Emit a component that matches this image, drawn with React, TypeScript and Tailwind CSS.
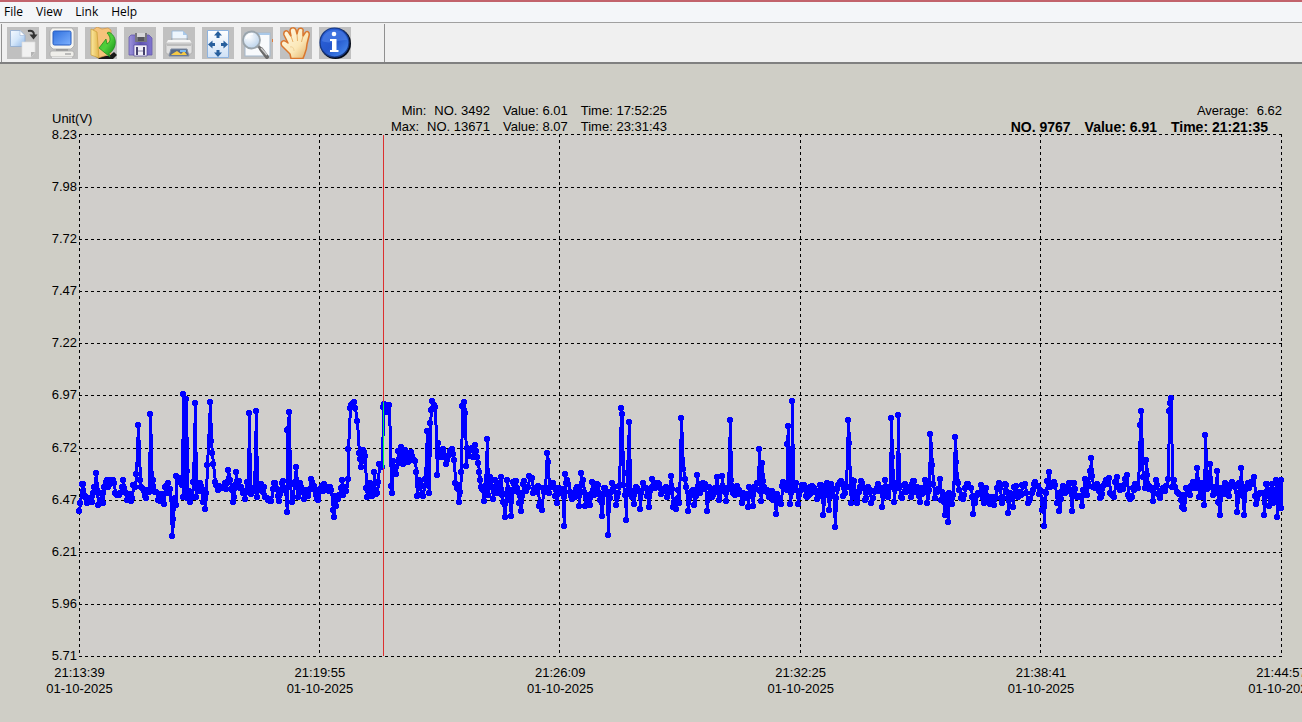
import React from "react";

const menuItems = ["File", "View", "Link", "Help"];

const yLabels = [
  "8.23", "7.98", "7.72", "7.47", "7.22", "6.97", "6.72", "6.47", "6.21", "5.96", "5.71",
];

const xLabels = ["21:13:39", "21:19:55", "21:26:09", "21:32:25", "21:38:41", "21:44:57"];

const extremes = [
  { label: "Min:", no: "NO. 3492", value: "Value: 6.01", time: "Time: 17:52:25" },
  { label: "Max:", no: "NO. 13671", value: "Value: 8.07", time: "Time: 23:31:43" },
];

const gridX = [0, 240, 480, 721, 961, 1202];
const gridY = [0, 53, 105, 157, 209, 261, 314, 366, 418, 470, 522];

// Turning points of the trace, in thirds of a plot unit, relative to each block's start
const BLOCK_TOP = 246;
const blocks: { start: number; points: string }[] = [
  {
    start: -9,
    points:
      "28,393 30,370 35,313 48,353 65,366 77,280 85,375 100,368 103,320 125,305 147,345 160,300 170,360 183,363 197,282 204,135 213,320 228,353 241,101 250,300 263,360 281,372 293,308 305,468 308,417 318,375 319,288 335,315 338,42 340,350 348,57 350,273 352,355 365,350 370,305 374,69 378,350 390,308 400,365 406,387 412,255 420,66 422,183 430,252 435,305 460,325 475,270 480,300 488,366 498,277 510,325 525,358 530,305 536,99 542,342 557,93 560,350 572,312 590,355 604,362 612,310 627,363 635,310 650,396 652,150 656,96 660,315 665,366 677,261 683,350 690,310 703,357 727,306 745,360",
  },
  {
    start: 241,
    points:
      "2,325 12,313 30,320 38,390 41,411 48,378 58,345 66,300 70,345 83,298 84,207 89,84 103,66 106,84 110,123 116,218 124,262 130,210 136,228 138,325 142,350 150,310 155,347 161,276 163,312 172,338 178,252 187,260 188,80 192,72 202,95 207,75 212,318 215,340 220,243 228,283 233,213 238,250 244,202 250,252 256,210 264,245 272,215 280,240 286,243 288,276 292,348 298,300 304,345 312,318 320,153 326,338 329,128 336,64 345,80 350,285 354,190 362,230 370,207 377,252 386,225 395,207 402,240 405,310 416,366 422,276 425,78 431,66 434,98 437,258 440,205 447,228 455,203 460,230 464,194 470,230 476,276 482,320 491,363 500,177 505,345 511,290 520,357 526,300 535,340 542,290 545,345 554,411 560,300 572,408 578,305 588,303 598,368 602,393 608,312 616,330 626,288 636,295 640,340 650,322 656,378 665,391 668,325 680,219 684,246 688,340 698,310 710,369 716,325",
  },
  {
    start: 481,
    points:
      "2,335 11,438 14,282 25,312 36,358 52,322 58,378 62,279 68,300 76,378 90,376 97,305 102,345 110,312 125,408 136,325 143,465 150,355 155,308 167,376 178,318 182,84 185,102 190,315 195,345 197,420 202,279 206,126 210,340 221,372 232,325 239,388 248,308 258,325 266,382 277,296 290,310 300,325 318,320 320,350 332,288 338,382 347,388 355,330 357,370 362,114 370,267 378,320 383,393 392,335 403,376 410,285 420,340 436,312 440,393 448,320 455,350 470,290 478,360 485,288 490,325 498,362 509,120 520,340 532,317 545,368 553,345 565,382 568,320 580,378 590,308 596,207 602,363 606,250 612,320 632,338 647,402 655,355 662,372 668,305 680,330 682,192 685,138 690,372 697,63 703,330 708,308 713,372",
  },
  {
    start: 721,
    points:
      "10,325 20,350 30,322 52,357 62,314 68,405 80,310 86,390 92,312 104,441 108,355 122,302 130,347 143,120 146,189 150,320 154,368 157,300 172,370 187,308 195,360 205,322 214,370 235,312 245,381 254,300 265,350 272,114 276,230 281,366 287,310 293,105 297,325 306,355 315,312 332,350 338,303 348,325 360,366 374,300 382,369 391,162 396,255 400,312 404,355 419,297 422,360 434,405 445,427 448,340 455,372 464,171 469,245 475,310 485,348 500,312 512,325 518,402 526,370 535,340 542,315 552,370 558,325 570,372 582,374 590,325 596,308 606,370 619,314 625,400 632,345 640,380 643,322 655,350 670,318 683,370 695,340 710,318",
  },
  {
    start: 961,
    points:
      "5,390 11,438 15,335 26,276 32,315 45,314 50,370 58,393 70,318 75,340 87,308 95,393 98,310 112,350 125,378 134,296 140,345 149,273 152,234 156,288 160,320 172,312 180,355 190,318 206,294 219,346 230,290 245,325 260,285 268,352 278,325 290,322 299,135 302,93 306,250 310,290 317,240 320,285 330,320 338,363 347,300 358,345 368,325 383,298 386,93 392,54 397,320 402,300 415,340 425,380 433,388 442,328 450,345 458,305 470,264 476,350 486,308 491,375 496,165 504,325 509,252 518,345 530,273 535,366 540,405 548,330 558,315 566,348 575,306 585,320 590,396 596,310 602,264 611,405 620,318 630,315 641,291 648,372 655,345 672,404 682,312 688,378 695,312 700,370 707,300 711,411 716,303 722,385 724,300",
  },
];

const buildTrace = () => {
  const top = BLOCK_TOP * 3;
  const knots = blocks.flatMap(({ start, points }) =>
    points.split(" ").map((pair) => {
      const [x, y] = pair.split(",").map(Number);
      return { x: start * 3 + x, y: top + y };
    })
  );

  let seed = 9767;
  const random = () => {
    seed = (seed * 16807) % 2147483647;
    return seed / 2147483647;
  };
  const toRest = (y: number) => Math.min(Math.max(y, top + 308), top + 352);

  // Samples between two knots wander along the resting band,
  // or stay near the knots when both are high
  const trace: { x: number; y: number }[] = [];
  knots.forEach((knot, i) => {
    trace.push(knot);
    const next = knots[i + 1];
    if (!next) return;
    const high = knot.y < top + 290 && next.y < top + 290;
    if (high && Math.abs(knot.y - next.y) > 70) return;
    const steps = Math.round((next.x - knot.x) / 4);
    for (let s = 1; s < steps; s++) {
      const t = s / steps;
      const x = knot.x + (next.x - knot.x) * t;
      const y = high
        ? (knot.y + next.y) / 2 + random() * 16 - 8
        : toRest(knot.y) * (1 - t) + toRest(next.y) * t + random() * 36 - 18;
      trace.push({ x, y });
    }
  });

  return trace.map(({ x, y }) => ({ x: Math.round(x / 3), y: Math.round(y / 3) }));
};

const trace = buildTrace();

const CopyIcon = () => (
  <svg viewBox="0 0 32 32" className="size-8">
    <defs>
      <linearGradient id="copyPage" x1="0" y1="0" x2="1" y2="1">
        <stop offset="0" stopColor="#f4f9ff" />
        <stop offset="0.5" stopColor="#d3e6fa" />
        <stop offset="1" stopColor="#8fb6e6" />
      </linearGradient>
    </defs>
    <path d="M3.5 3.5H13L18 8.500V19.500H3.500Z" fill="url(#copyPage)" stroke="#8fabcf" strokeWidth=".8" />
    <path d="M13 3.500V8.500H18Z" fill="#fff" stroke="#9db6d6" strokeWidth=".6" />
    <path d="M15 15H28V25L24 30H15Z" fill="#f1f1f1" stroke="#dcdcdc" strokeWidth=".7" />
    <path d="M24 30V25H28Z" fill="#b4b4b4" />
    <path d="M21 4C25 3 27 4.500 27 8" fill="none" stroke="#333" strokeWidth="2" />
    <path d="M22.500 7.500H30.500L26.500 12.500Z" fill="#333" />
  </svg>
);

const ComputerIcon = () => (
  <svg viewBox="0 0 32 32" className="size-8">
    <defs>
      <linearGradient id="screen" x1="0" y1="0" x2="1" y2="1">
        <stop offset="0" stopColor="#2f6fdd" />
        <stop offset="1" stopColor="#7fb2ff" />
      </linearGradient>
    </defs>
    <path d="M6 1H26L28 4V19L25 22H7L4 19V4Z" fill="#f6f5f1" stroke="#a8a8a8" strokeWidth=".8" />
    <rect x="7" y="4" width="18" height="14" rx="1.500" fill="url(#screen)" stroke="#245bc0" />
    <path d="M10 22H22V24H10Z" fill="#9a9a9a" />
    <rect x="4" y="24" width="24" height="6" rx="2" fill="#efeeea" stroke="#a8a8a8" strokeWidth=".8" />
    <path d="M19 27H25" stroke="#aaa" strokeWidth="1.500" />
    <path d="M6 30.500H26" stroke="#e6e6e6" />
  </svg>
);

const OpenIcon = () => (
  <svg viewBox="0 0 32 32" className="size-8">
    <defs>
      <linearGradient id="folder" x1="0" y1="0" x2="1" y2="0">
        <stop offset="0" stopColor="#fbe9a0" />
        <stop offset="1" stopColor="#e3b54a" />
      </linearGradient>
      <linearGradient id="openArrow" x1="0" y1="0" x2="1" y2="1">
        <stop offset="0" stopColor="#3fbf2f" />
        <stop offset=".5" stopColor="#4fd03c" />
        <stop offset="1" stopColor="#0c8410" />
      </linearGradient>
    </defs>
    <path d="M24 29L29 25L32 28L28 32H14L10 29Z" fill="#171717" />
    <path d="M8 3L12 0L17 2L23 1L26 3V27L13 31Z" fill="#f5c37b" stroke="#cf9444" strokeWidth=".7" />
    <path d="M6 2L12 5L14 31L6 28Z" fill="url(#folder)" stroke="#c99c35" strokeWidth=".7" />
    <path
      d="M24 5C30 8 32 15 29 21C27 25 25 26 24 26L25 30L14 21L21 12L22 17C26 15 26 10 22 6Z"
      fill="url(#openArrow)"
      stroke="#168516"
      strokeWidth=".7"
    />
  </svg>
);

const SaveIcon = () => (
  <svg viewBox="0 0 32 32" className="size-8">
    <defs>
      <linearGradient id="disk" x1="0" y1="0" x2="1" y2="0">
        <stop offset="0" stopColor="#9d94dc" />
        <stop offset=".5" stopColor="#5c51b0" />
        <stop offset="1" stopColor="#8176cf" />
      </linearGradient>
    </defs>
    <path d="M7 8H25L28 11V28H5V10Z" fill="url(#disk)" stroke="#6459ac" strokeWidth=".8" />
    <path d="M11 6H23V15H11Z" fill="#77777d" />
    <path d="M13 6H21V10H13Z" fill="#d6d6d8" />
    <rect x="14" y="10" width="6" height="4" fill="#55555b" />
    <path d="M10 18H23V29H10Z" fill="#f1eff7" stroke="#514697" strokeWidth=".7" />
    <path d="M12 20H14V28H12ZM19 20H21V28H19Z" fill="#44406c" />
    <path d="M14 24H19" stroke="#8a84a8" />
  </svg>
);

const PrintIcon = () => (
  <svg viewBox="0 0 32 32" className="size-8">
    <path d="M9 4H20L24 8V17H9Z" fill="#edf5fd" stroke="#94b5d8" strokeWidth=".8" />
    <path d="M20 4V8H24Z" fill="#a9c9ea" />
    <path d="M5 13H27L29 17H3Z" fill="#f5f5f5" />
    <rect x="3" y="16" width="26" height="11" rx="2" fill="#e0e0e0" stroke="#aaa" strokeWidth=".7" />
    <path d="M4 18H28" stroke="#9a9a9a" />
    <path d="M8 22H24L26 29H6Z" fill="#576987" stroke="#7f8ba0" />
    <path d="M9 27L14 24L18 27L21 24L24 28H8Z" fill="#f5c945" />
    <path d="M17 23H23V25H17Z" fill="#78b7ef" />
    <path d="M8 12H25" stroke="#999" strokeWidth=".8" />
  </svg>
);

const FitIcon = () => (
  <svg viewBox="0 0 32 32" className="size-8">
    <defs>
      <linearGradient id="fitPage" x1="0" y1="0" x2="0" y2="1">
        <stop offset="0" stopColor="#fff" />
        <stop offset="1" stopColor="#cfe1f6" />
      </linearGradient>
    </defs>
    <path d="M5.500 3.500H26.500V30.500H5.500Z" fill="url(#fitPage)" stroke="#8eb3df" />
    <g fill="#275f9d">
      <path d="M16 4L20 8.500H17.500V11H14.500V8.500H12Z" />
      <path d="M16 30L20 25.500H17.500V23H14.500V25.500H12Z" />
      <path d="M6 17.500L10.500 13.500V16H13V19H10.500V21.500Z" />
      <path d="M26 17.500L21.500 13.500V16H19V19H21.500V21.500Z" />
    </g>
  </svg>
);

const ZoomIcon = () => (
  <svg viewBox="0 0 32 32" className="size-8">
    <defs>
      <radialGradient id="lens" cx=".35" cy=".3" r=".8">
        <stop offset="0" stopColor="#fff" />
        <stop offset="1" stopColor="#b5cfe9" />
      </radialGradient>
    </defs>
    <rect x="4" y="6" width="25" height="23" fill="#f8fafc" stroke="#a4b8cc" />
    <path d="M4 7H29" stroke="#a9c8e8" strokeWidth="2" />
    <path d="M16 18L21 23" stroke="#777" strokeWidth="3" />
    <path d="M20 22L26 30" stroke="#6b6b6b" strokeWidth="4" strokeLinecap="round" />
    <path d="M20 21L26 28" stroke="#ccc" strokeWidth="1.500" />
    <circle cx="10.500" cy="13" r="8.500" fill="url(#lens)" stroke="#9aa4ab" strokeWidth="1.800" />
    <path d="M5 12A6 6 0 0 1 12 7" fill="none" stroke="#fff" strokeWidth="1.500" />
    <path d="M31 12H32V15H31Z" fill="#e07a38" />
  </svg>
);

const HandIcon = () => (
  <svg viewBox="0 0 32 32" className="size-8">
    <defs>
      <linearGradient id="palm" x1="0" y1="0" x2="1" y2="1">
        <stop offset="0" stopColor="#fffbea" />
        <stop offset=".6" stopColor="#fbe7b6" />
        <stop offset="1" stopColor="#dfad62" />
      </linearGradient>
    </defs>
    <path
      d="M11 31.500L10 27L2 19C0 16 2 13 5 14L8 16L4 8C3 4 7 2 9 6L11 9L10 4C10 0 15 0 16 3L17 7L18 3C19 0 24 1 23 4L23 9L25 6C27 3 30 5 29 9L27 17C27 23 25 26 23 31.500Z"
      fill="url(#palm)"
      stroke="#d9772e"
      strokeWidth="1.500"
      strokeLinejoin="round"
    />
    <path d="M11 9L13 15M17 7L17.500 14M23 9L21.500 15" fill="none" stroke="#e7b06a" />
    <path d="M10 20C13 19 14 22 14 24" fill="none" stroke="#efd096" />
  </svg>
);

const InfoIcon = () => (
  <svg viewBox="0 0 32 32" className="size-8">
    <defs>
      <linearGradient id="infoBall" x1="0" y1="0" x2="1" y2="1">
        <stop offset="0" stopColor="#2f65dc" />
        <stop offset=".5" stopColor="#2456cc" />
        <stop offset="1" stopColor="#4e94f4" />
      </linearGradient>
    </defs>
    <circle cx="16.500" cy="16.500" r="15.500" fill="#050b18" />
    <circle cx="15.500" cy="15.500" r="14.500" fill="url(#infoBall)" stroke="#173987" strokeWidth="1.200" />
    <path d="M3 14C4 7 9 3 16 3S27 7 28 13C20 12 12 18 3 14Z" fill="#5f91ef" opacity=".45" />
    <circle cx="15" cy="7" r="2.300" fill="#fff" />
    <path d="M11 12H17.500V23H19.500V25H11V23H13V14H11Z" fill="#fff" />
  </svg>
);

const tools = [
  { label: "Copy", Icon: CopyIcon },
  { label: "Device", Icon: ComputerIcon },
  { label: "Open", Icon: OpenIcon },
  { label: "Save", Icon: SaveIcon },
  { label: "Print", Icon: PrintIcon },
  { label: "Fit to page", Icon: FitIcon },
  { label: "Zoom", Icon: ZoomIcon },
  { label: "Pan", Icon: HandIcon },
  { label: "About", Icon: InfoIcon },
];

const Plot = () => (
  <svg viewBox="0 0 1203 523" className="block w-full overflow-visible" shapeRendering="crispEdges">
    <rect width="1203" height="523" fill="#d0cecb" />
    <g stroke="#000" strokeDasharray="3 3">
      {gridY.map((y) => (
        <path key={y} d={`M0 ${y + 0.5}H1203`} />
      ))}
      {gridX.map((x) => (
        <path key={x} d={`M${x + 0.5} 0V523`} />
      ))}
    </g>
    <polyline
      points={trace.map(({ x, y }) => `${x + 0.5},${y + 0.5}`).join(" ")}
      fill="none"
      stroke="#0000ff"
      strokeWidth="3"
      strokeLinejoin="round"
    />
    {trace.map(({ x, y }, i) => (
      <circle key={i} cx={x} cy={y} r="3" fill="#0000ff" />
    ))}
    <path d="M304.500 1V522" stroke="#dc2f2f" />
    <path d="M304.500 268V334" stroke="#00ff40" />
  </svg>
);

const App = () => {
  return (
    <div className="flex min-h-screen flex-col overflow-hidden bg-[#cfcec6] font-['Liberation_Sans',Arial,sans-serif] text-[13px] leading-4 text-black">
      <nav className="flex h-[22px] gap-[13px] border-t-2 border-[#c2636c] bg-[#f4f6f9] pl-1 font-['Open_Sans','Segoe_UI',sans-serif] text-xs leading-5">
        {menuItems.map((item) => (
          <button key={item} type="button">
            {item}
          </button>
        ))}
      </nav>

      <div className="flex border-t border-b-2 border-t-[#a0a0a0] border-b-[#808080] bg-[#f0f0f0] pt-px pl-px">
        <div className="flex gap-[7px] border-x border-[#909090] py-[3px] pr-[33px] pl-[5px]">
          {tools.map(({ label, Icon }) => (
            <button key={label} type="button" aria-label={label} className="size-8 bg-[#c0c0c0]">
              <Icon />
            </button>
          ))}
        </div>
      </div>

      <main className="pt-[39px] pr-5">
        <div className="flex h-[31px] whitespace-nowrap">
          <div className="w-[52px] shrink-0" />
          <div className="w-[315px] shrink-0 pt-2">Unit(V)</div>
          <div className="w-[300px] shrink-0">
            {extremes.map(({ label, no, value, time }) => (
              <p key={label} className="flex justify-end gap-[13px]">
                <span className="flex gap-2">
                  <span>{label}</span>
                  <span>{no}</span>
                </span>
                <span>{value}</span>
                <span>{time}</span>
              </p>
            ))}
          </div>
          <div className="flex-1">
            <p className="flex justify-end gap-2">
              <span>Average:</span>
              <span>6.62</span>
            </p>
            <p className="flex justify-end gap-[14px] pr-[14px] text-sm leading-4 font-bold">
              <span>NO. 9767</span>
              <span>Value: 6.91</span>
              <span>Time: 21:21:35</span>
            </p>
          </div>
        </div>

        <div className="flex">
          <div className="flex w-[79px] shrink-0 flex-col justify-between pr-[2px]">
            {yLabels.map((label) => (
              <div key={label} className="flex h-px items-center justify-end">
                {label}
              </div>
            ))}
          </div>
          <div className="min-w-0 flex-1">
            <Plot />
          </div>
        </div>

        <div className="flex justify-between pt-2 pl-[79px]">
          {xLabels.map((label) => (
            <div key={label} className="flex w-px justify-center text-center whitespace-nowrap">
              <div>
                <p>{label}</p>
                <p>01-10-2025</p>
              </div>
            </div>
          ))}
        </div>
      </main>
    </div>
  );
};

export default App;
